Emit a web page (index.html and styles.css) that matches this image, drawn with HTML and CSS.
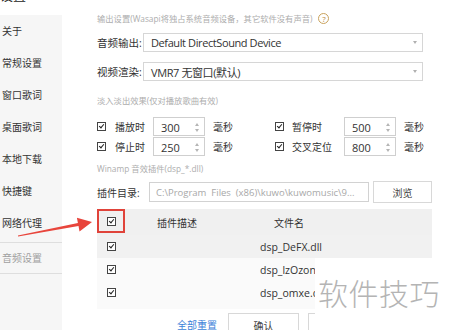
FILE: index.html
```html
<!DOCTYPE html>
<html lang="zh-CN">
<head>
  <meta charset="UTF-8">
  <title>音频设置</title>
  <link rel="stylesheet" href="styles.css">
</head>
<body>

  <div class="app">
    <div class="sidebar">
      <div class="side-title">设置</div>
      <ul class="menu">
        <li>关于</li>
        <li>常规设置</li>
        <li>窗口歌词</li>
        <li>桌面歌词</li>
        <li>本地下载</li>
        <li>快捷键</li>
        <li>网络代理</li>
        <li class="active">音频设置</li>
      </ul>
    </div>

    <div class="panel">
      <p class="section">输出设置(Wasapi将独占系统音频设备，其它软件没有声音) <span class="help">?</span></p>

      <div class="field">
        <label>音频输出:</label>
        <div class="select">Default DirectSound Device<span class="caret"></span></div>
      </div>
      <div class="field second">
        <label>视频渲染:</label>
        <div class="select">VMR7 无窗口(默认)<span class="caret"></span></div>
      </div>

      <p class="section fade-title">淡入淡出效果(仅对播放歌曲有效)</p>

      <div class="fade">
        <span class="check"></span><span>播放时</span>
        <div class="spin">300<span class="arrows"></span></div><span class="ms">毫秒</span>
        <span class="check"></span><span>暂停时</span>
        <div class="spin">500<span class="arrows"></span></div><span class="ms">毫秒</span>

        <span class="check"></span><span>停止时</span>
        <div class="spin">250<span class="arrows"></span></div><span class="ms">毫秒</span>
        <span class="check"></span><span>交叉定位</span>
        <div class="spin">800<span class="arrows"></span></div><span class="ms">毫秒</span>
      </div>

      <p class="section winamp">Winamp 音效插件(dsp_*.dll)</p>

      <div class="dir">
        <label>插件目录:</label>
        <div class="path">C:\Program&nbsp; Files&nbsp; (x86)\kuwo\kuwomusic\9...</div>
        <button class="btn browse">浏览</button>
      </div>

      <div class="table">
        <div class="row head">
          <div class="cell"><span class="mark"><span class="check"></span></span></div>
          <div class="cell desc">插件描述</div>
          <div class="cell name">文件名</div>
        </div>
        <div class="row picked">
          <div class="cell"><span class="check"></span></div>
          <div class="cell desc"></div>
          <div class="cell name">dsp_DeFX.dll</div>
        </div>
        <div class="row">
          <div class="cell"><span class="check"></span></div>
          <div class="cell desc"></div>
          <div class="cell name">dsp_lzOzone</div>
        </div>
        <div class="row">
          <div class="cell"><span class="check"></span></div>
          <div class="cell desc"></div>
          <div class="cell name">dsp_omxe.dll</div>
        </div>
      </div>

      <div class="footer">
        <a class="reset">全部重置</a>
        <button class="btn">确认</button>
        <button class="btn">取消</button>
      </div>
    </div>
  </div>

  <svg class="arrow" width="100" height="40" viewBox="0 0 100 40">
    <polygon points="17.9,25.4 77.9,13.1 76.9,7.7 92,12 79.5,21.5 78.5,16.1 18.1,26.6" fill="#e8453c"/>
  </svg>

  <div class="watermark">软件技巧</div>

</body>
</html>
```

FILE: styles.css
```css
* {
  box-sizing: border-box;
}

body {
  margin: 0;
  width: 450px;
  height: 330px;
  overflow: hidden;
  position: relative;
  background: #ffffff;
  font-family: "Open Sans", "Noto Sans CJK SC", sans-serif;
  color: #333;
}

.app {
  display: flex;
  height: 330px;
}

/* left menu */
.sidebar {
  width: 62px;
  flex: none;
}

.side-title {
  margin-top: -11px;
  height: 26px;
  font-size: 13px;
  line-height: 13px;
  color: #222;
}

.menu {
  list-style: none;
  margin: 0;
  padding: 0;
  height: 315px;
  background: #f6f6f6;
}

.menu li {
  height: 32px;
  line-height: 32px;
  font-size: 10px;
  padding-left: 2px;
  white-space: nowrap;
}

.menu li.active {
  margin-top: 3px;
  border-top: 1px solid #dedede;
  border-bottom: 1px solid #dedede;
  line-height: 30px;
  color: #a0a0a0;
}

/* settings panel */
.panel {
  flex: 1;
  padding: 12px 0 0 35px;
}

.section {
  margin: 0;
  height: 13px;
  line-height: 13px;
  font-size: 8.3px;
  color: #adadad;
  display: flex;
  align-items: center;
  white-space: nowrap;
}

.help {
  display: inline-flex;
  align-items: center;
  justify-content: center;
  width: 11px;
  height: 11px;
  margin-left: 6px;
  border: 1px solid #c9a25c;
  border-radius: 50%;
  color: #b8893a;
  font-size: 8px;
  line-height: 1;
}

.field {
  display: flex;
  align-items: center;
  height: 19px;
  margin-top: 8px;
}

.field.second {
  margin-top: 10px;
}

.field label {
  width: 46px;
  font-size: 10.5px;
  color: #333;
}

.select {
  width: 280px;
  height: 19px;
  border: 1px solid #d6d6d6;
  padding: 0 5px 0 7px;
  display: flex;
  align-items: center;
  justify-content: space-between;
  font-size: 11px;
  letter-spacing: -0.4px;
  color: #333;
}

.caret {
  width: 0;
  height: 0;
  border-left: 2px solid transparent;
  border-right: 2px solid transparent;
  border-top: 3px solid #b0b0b0;
}

.fade-title {
  margin-top: 13px;
}

/* fade in / out grid */
.fade {
  display: grid;
  grid-template-columns: 18px 38px 52px 70px 17px 52px 52px auto;
  grid-auto-rows: 19px;
  row-gap: 1px;
  align-items: center;
  margin-top: 10px;
  font-size: 10px;
}

.check {
  display: inline-block;
  position: relative;
  width: 9px;
  height: 9px;
  border: 1px solid #444;
  background: #fff;
}

.check::after {
  content: "";
  position: absolute;
  left: 2px;
  top: 0px;
  width: 2px;
  height: 4px;
  border-right: 1.5px solid #222;
  border-bottom: 1.5px solid #222;
  transform: rotate(40deg);
}

.spin {
  height: 19px;
  border: 1px solid #cfcfcf;
  padding: 2px 4px 0 7px;
  display: flex;
  align-items: center;
  justify-content: space-between;
  font-size: 11px;
}

.arrows {
  position: relative;
  width: 5px;
  height: 9px;
}

.arrows::before,
.arrows::after {
  content: "";
  position: absolute;
  left: 0;
  border-left: 2.5px solid transparent;
  border-right: 2.5px solid transparent;
}

.arrows::before {
  top: 0;
  border-bottom: 3px solid #b5b5b5;
}

.arrows::after {
  bottom: 0;
  border-top: 3px solid #b5b5b5;
}

.ms {
  padding-left: 8px;
  font-size: 10px;
}

.winamp {
  margin-top: 6px;
}

/* plugin dir */
.dir {
  display: flex;
  align-items: center;
  height: 22px;
  margin-top: 6px;
}

.dir label {
  width: 52px;
  font-size: 10px;
}

.path {
  width: 220px;
  height: 20px;
  border: 1px solid #d2d2d2;
  padding-left: 6px;
  display: flex;
  align-items: center;
  font-size: 9.5px;
  color: #a8a8a8;
  white-space: nowrap;
  overflow: hidden;
}

.btn {
  height: 22px;
  border: 1px solid #d8d8d8;
  background: #fff;
  font-family: inherit;
  font-size: 10px;
  color: #444;
}

.browse {
  width: 59px;
  margin-left: 4px;
}

/* plugin table */
.table {
  width: 335px;
  margin-top: 6px;
  padding-bottom: 5px;
  background: #fafafa;
}

.row {
  display: grid;
  grid-template-columns: 28px 100px 130px 1fr;
  height: 23px;
  align-items: center;
  font-size: 10.5px;
}

.row.head {
  height: 26px;
  background: #f0f0f0;
  font-size: 10px;
}

.row.picked {
  background: #f1f1f1;
}

.cell {
  display: flex;
  align-items: center;
  justify-content: center;
  height: 100%;
}

.cell.desc {
  justify-content: flex-start;
  padding-left: 32px;
}

.cell.name {
  justify-content: flex-start;
  padding-left: 35px;
  white-space: nowrap;
}

.head .cell.name {
  padding-left: 49px;
}

.mark {
  display: flex;
  align-items: center;
  justify-content: center;
  width: 28px;
  height: 24px;
  margin-top: -2px;
  border: 2px solid #e0433a;
}

.footer {
  display: flex;
  align-items: flex-start;
  margin-top: 4px;
  padding-left: 80px;
}

.reset {
  font-size: 10px;
  line-height: 12px;
  color: #3b7fd9;
  width: 51px;
  padding-top: 6px;
}

.footer .btn {
  width: 71px;
  height: 24px;
  margin-right: 9px;
}

/* annotation overlays */
.arrow {
  position: absolute;
  left: 0;
  top: 210px;
}

.watermark {
  position: absolute;
  left: 315px;
  top: 258px;
  width: 135px;
  height: 72px;
  background: #fff;
  padding: 17px 0 0 3px;
  font-family: "Noto Sans CJK SC", sans-serif;
  font-size: 30px;
  font-weight: 300;
  line-height: 34px;
  letter-spacing: 0.5px;
  color: #b4b4b4;
}
```
